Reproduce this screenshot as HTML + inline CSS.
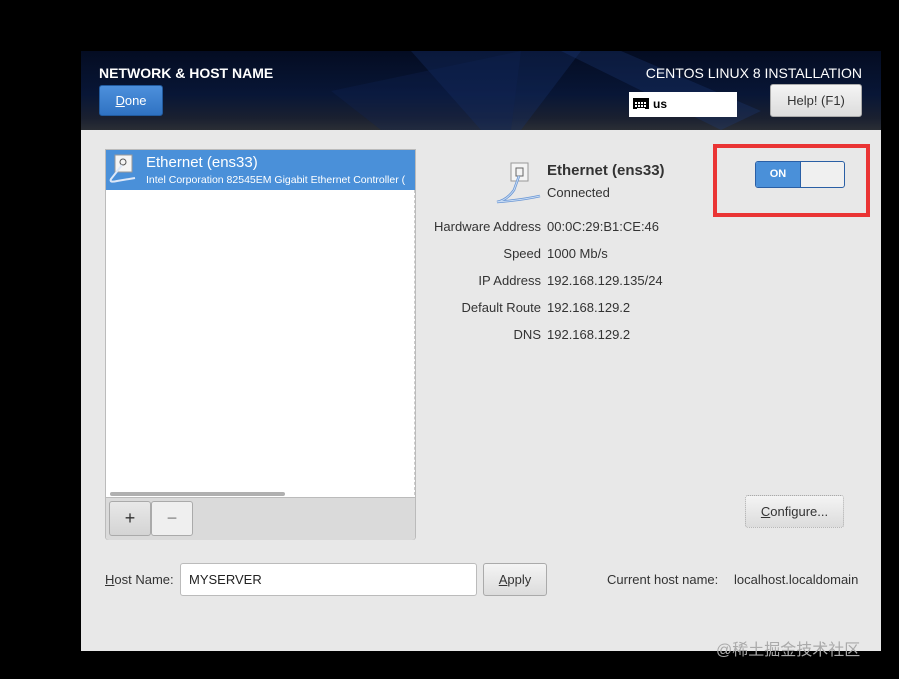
<!DOCTYPE html>
<html><head><style>
body{margin:0;width:899px;height:679px;background:#000;position:relative;overflow:hidden;font-family:"Liberation Sans","DejaVu Sans",sans-serif;}
.a{position:absolute;}
#panel{left:81px;top:51px;width:800px;height:600px;background:#e8e8e8;}
#hdr{left:81px;top:51px;width:800px;height:79px;background:linear-gradient(180deg,#040c22 0%,#081636 55%,#1a2030 85%,#2a2e35 100%);overflow:hidden}
.btn{border:1px solid #aaa;border-radius:3px;background:linear-gradient(#f4f4f4,#dcdcdc);color:#333;font-size:13px;text-align:center;box-sizing:border-box;}
.lbl{font-size:13px;color:#333;}
</style></head><body>
<div class="a" id="panel"></div>
<div class="a" id="hdr">
<svg width="800" height="79" style="position:absolute;left:0;top:0"><polygon points="330,0 500,0 440,79 400,79" fill="#17306a" opacity="0.35"/><polygon points="480,0 540,0 680,60 640,79" fill="#1e3c7a" opacity="0.3"/><polygon points="250,40 440,0 430,79 300,79" fill="#102656" opacity="0.3"/></svg>
</div>
<div class="a" style="left:99px;top:65px;color:#fff;font-size:14px;font-weight:bold;">NETWORK &amp; HOST NAME</div>
<div class="a" style="left:99px;top:85px;width:64px;height:31px;background:linear-gradient(#4d90dc,#2f72c2);border-radius:3px;border:1px solid #215a9e;box-sizing:border-box;color:#fff;font-size:13px;line-height:29px;text-align:center"><u>D</u>one</div>
<div class="a" style="right:37px;top:65px;color:#fff;font-size:14px;">CENTOS LINUX 8 INSTALLATION</div>
<div class="a" style="left:629px;top:92px;width:108px;height:25px;background:#fff;"></div>
<div class="a" style="left:633px;top:98px;width:16px;height:11px;background:#000;"><svg width="16" height="11"><g fill="#fff"><rect x="2" y="2" width="2" height="2"/><rect x="5" y="2" width="2" height="2"/><rect x="8" y="2" width="2" height="2"/><rect x="11" y="2" width="2" height="2"/><rect x="2" y="5" width="2" height="2"/><rect x="5" y="5" width="2" height="2"/><rect x="8" y="5" width="2" height="2"/><rect x="11" y="5" width="2" height="2"/><rect x="4" y="8" width="8" height="1.5"/></g></svg></div>
<div class="a" style="left:653px;top:97px;font-size:12px;font-weight:bold;">us</div>
<div class="a btn" style="left:770px;top:84px;width:92px;height:33px;line-height:31px;">Help! (F1)</div>

<div class="a" style="left:105px;top:149px;width:311px;height:391px;background:#fff;border:1px solid #bbb;border-radius:0 0 3px 3px;box-sizing:border-box"></div>
<div class="a" style="left:106px;top:150px;width:309px;height:40px;background:#4a90d9;"></div>
<svg class="a" style="left:107px;top:152px" width="36" height="36"><rect x="8" y="3" width="17" height="17" fill="#f4f4f4" stroke="#999"/><circle cx="16" cy="10" r="3" fill="none" stroke="#555"/><path d="M15 13 L4 27 Q2 31 10 29 L28 26" fill="none" stroke="#dde8f8" stroke-width="2"/></svg>
<div class="a" style="left:146px;top:154px;color:#fff;font-size:15px;">Ethernet (ens33)</div>
<div class="a" style="left:146px;top:174px;color:#fff;font-size:10.5px;white-space:nowrap;width:269px;overflow:hidden">Intel Corporation 82545EM Gigabit Ethernet Controller (</div>
<div class="a" style="left:414px;top:190px;height:305px;border-left:1px dashed #ccc"></div>
<div class="a" style="left:110px;top:492px;width:175px;height:4px;background:#b0b0b0;border-radius:2px"></div>
<div class="a" style="left:106px;top:497px;width:309px;height:42px;background:#dadada;border-top:1px solid #bbb;border-radius:0 0 3px 3px"></div>
<div class="a btn" style="left:109px;top:501px;width:42px;height:35px;line-height:33px;font-size:18px;background:linear-gradient(#e8e8e8,#d4d4d4)">+</div>
<div class="a btn" style="left:151px;top:501px;width:42px;height:35px;line-height:33px;font-size:18px;background:#efefef;color:#888">−</div>

<svg class="a" style="left:492px;top:160px" width="50" height="48"><rect x="19" y="3" width="17" height="18" fill="#f4f4f4" stroke="#999"/><rect x="24" y="8" width="7" height="8" fill="none" stroke="#666"/><path d="M27 16 L22 30 Q15 40 5 42 Q30 40 48 36" fill="none" stroke="#6a96d4" stroke-width="2.5"/><path d="M27 16 L22 30 Q15 40 5 42 Q30 40 48 36" fill="none" stroke="#c8dcf4" stroke-width="1"/></svg>
<div class="a" style="left:547px;top:162px;font-size:15px;font-weight:bold;color:#333">Ethernet (ens33)</div>
<div class="a lbl" style="left:547px;top:185px;">Connected</div>
<div class="a lbl" style="left:380px;width:161px;text-align:right;top:213px;line-height:27px">Hardware Address<br>Speed<br>IP Address<br>Default Route<br>DNS</div>
<div class="a lbl" style="left:547px;top:213px;line-height:27px">00:0C:29:B1:CE:46<br>1000 Mb/s<br>192.168.129.135/24<br>192.168.129.2<br>192.168.129.2</div>

<div class="a" style="left:713px;top:144px;width:157px;height:73px;border:4px solid #ea3434;box-sizing:border-box"></div>
<div class="a" style="left:755px;top:161px;width:90px;height:27px;border:1px solid #2a5fa5;border-radius:3px;box-sizing:border-box;background:#f0f0f0;overflow:hidden"><div style="width:44px;height:25px;background:#4a90d9;color:#fff;font-size:11px;font-weight:bold;line-height:25px;text-align:center;border-right:1px solid #2a5fa5">ON</div></div>

<div class="a btn" style="left:745px;top:495px;width:99px;height:33px;line-height:31px;border-style:dotted"><u>C</u>onfigure...</div>

<div class="a lbl" style="left:105px;top:572px;"><u>H</u>ost Name:</div>
<div class="a" style="left:180px;top:563px;width:297px;height:33px;background:#fff;border:1px solid #bbb;border-radius:3px;box-sizing:border-box;font-size:13px;line-height:31px;padding-left:8px;color:#222">MYSERVER</div>
<div class="a btn" style="left:483px;top:563px;width:64px;height:33px;line-height:31px;"><u>A</u>pply</div>
<div class="a lbl" style="left:607px;top:572px;">Current host name:</div>
<div class="a lbl" style="left:734px;top:572px;">localhost.localdomain</div>
<div class="a" style="left:716px;top:636px;font-size:16px;color:#aaa;font-family:'Liberation Sans','Noto Sans CJK SC',sans-serif">@稀土掘金技术社区</div>
</body></html>
